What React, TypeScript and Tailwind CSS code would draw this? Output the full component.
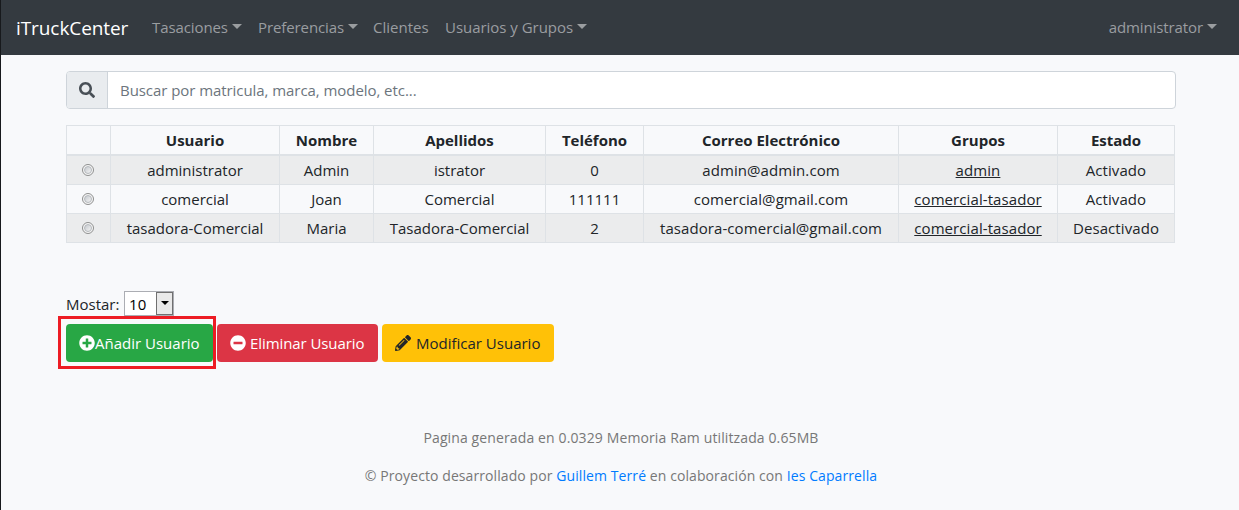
import React from "react";
import { FaSearch, FaPlusCircle, FaMinusCircle, FaPencilAlt } from "react-icons/fa";

function Caret() {
  return (
    <span className="ml-1 mt-[-1px] inline-block h-0 w-0 border-x-[5px] border-t-[5px] border-x-transparent border-t-current" />
  );
}

function NavItem({ label, caret = true, className }: { label: string; caret?: boolean; className: string }) {
  return (
    <a className={`flex h-10 items-center pb-[2px] whitespace-nowrap text-[#9a9da0] ${className}`}>
      <span>{label}</span>
      {caret && <Caret />}
    </a>
  );
}

const headers = ["", "Usuario", "Nombre", "Apellidos", "Teléfono", "Correo Electrónico", "Grupos", "Estado"];
const widths = ["w-[44px]", "w-[169px]", "w-[94px]", "w-[172px]", "w-[98px]", "w-[255px]", "w-[159px]", "w-[117px]"];
const rows = [
  ["administrator", "Admin", "istrator", "0", "admin@admin.com", "admin", "Activado"],
  ["comercial", "Joan", "Comercial", "111111", "comercial@gmail.com", "comercial-tasador", "Activado"],
  ["tasadora-Comercial", "Maria", "Tasadora-Comercial", "2", "tasadora-comercial@gmail.com", "comercial-tasador", "Desactivado"],
];

function Radio() {
  return (
    <span className="ml-[15px] flex h-3 w-3 items-center justify-center rounded-full border border-[#8e8f8f] bg-[#f6f6f6]">
      <span className="h-2 w-2 rounded-full border border-[#b4b8bc] bg-linear-to-br from-[#c6cacf] to-[#f4f4f4]" />
    </span>
  );
}

export default function App() {
  return (
    <div className="h-[510px] w-[1239px] overflow-hidden border-l border-[#17191c] bg-[#f8f9fb] font-['Open_Sans','Noto_Sans',sans-serif] text-[15px] leading-6 text-[#212529]">
      <nav className="flex h-[55px] items-center bg-[#343a40] pr-[22px] pl-[15px]">
        <a className="w-[136px] text-[19px] tracking-[-0.08px] whitespace-nowrap text-white">iTruckCenter</a>
        <NavItem label="Tasaciones" className="w-[106px] tracking-[-0.1px]" />
        <NavItem label="Preferencias" className="w-[115px] tracking-[-0.1px]" />
        <NavItem label="Clientes" caret={false} className="w-[72px]" />
        <NavItem label="Usuarios y Grupos" className="tracking-[-0.03px]" />
        <NavItem label="administrator" className="ml-auto tracking-[-0.1px]" />
      </nav>

      <main className="pl-[65px]">
        <div className="mt-4 flex h-[38px] w-[1110px] overflow-hidden rounded border border-[#ced4da] bg-white">
          <div className="flex w-[41px] items-center justify-center border-r border-[#ced4da] bg-[#e9ecef] text-[#495057]">
            <FaSearch size={16} />
          </div>
          <div className="flex items-center pl-3 tracking-[-0.06px] text-[#6c757d]">Buscar por matricula, marca, modelo, etc...</div>
        </div>

        <table className="mt-4 w-[1109px] table-fixed border-separate border-spacing-0 border-t border-l border-[#dee2e6] text-center">
          <thead>
            <tr className="h-[30px]">
              {headers.map((h, i) => (
                <th key={i} className={`${widths[i]} border-r border-b-2 border-[#dee2e6] p-0 leading-[26px] font-bold whitespace-nowrap`}>
                  {h}
                </th>
              ))}
            </tr>
          </thead>
          <tbody>
            {rows.map((r, i) => (
              <tr key={i} className="h-[29px] odd:bg-[#ebeced]">
                <td className="border-r border-b border-[#dee2e6] p-0">
                  <Radio />
                </td>
                {r.map((c, j) => (
                  <td
                    key={j}
                    className={`border-r border-b border-[#dee2e6] p-0 leading-6 whitespace-nowrap ${j >= 4 ? "tracking-[0.08px]" : ""}`}
                  >
                    {j === 5 ? <u className="underline-offset-1 [text-decoration-skip-ink:none]">{c}</u> : c}
                  </td>
                ))}
              </tr>
            ))}
          </tbody>
        </table>

        <div className="mt-[47px] flex h-[27px] items-center">
          <span className="w-[58px] whitespace-nowrap">Mostar:</span>
          <div className="mb-[1px] flex h-[25px] w-[50px] border border-[#abadb3] bg-white">
            <span className="flex-1 pl-1 leading-6 tracking-[0.2px] text-black">10</span>
            <span className="flex w-[17px] items-center justify-center border border-[#707070] bg-[#e9e9e9]">
              <span className="border-x-[4px] border-t-[4px] border-x-transparent border-t-black" />
            </span>
          </div>
        </div>

        <div className="mt-[7px] flex h-[38px] gap-1">
          <div className="relative w-[147px]">
            <button className="flex h-[38px] w-[147px] items-center rounded bg-[#28a745] pl-[13px] whitespace-nowrap text-white">
              <FaPlusCircle size={16} />
              Añadir Usuario
            </button>
            <div className="absolute -top-2 -left-2 h-[53px] w-[158px] border-3 border-[#ed1c24]" />
          </div>
          <button className="flex w-[161px] items-center gap-1 rounded bg-[#dc3545] pl-[13px] tracking-[-0.08px] whitespace-nowrap text-white">
            <FaMinusCircle size={16} />
            Eliminar Usuario
          </button>
          <button className="flex w-[172px] items-center gap-[5px] rounded bg-[#ffc107] pl-[13px] whitespace-nowrap">
            <FaPencilAlt size={16} />
            Modificar Usuario
          </button>
        </div>
      </main>

      <footer className="mt-16 flex flex-col items-center gap-[14px] pl-[2px] whitespace-nowrap text-[14px] text-[#777777]">
        <p className="tracking-[0.12px]">Pagina generada en 0.0329 Memoria Ram utilitzada 0.65MB</p>
        <p className="tracking-[0.085px]">
          © Proyecto desarrollado por <a className="text-[#007bff]">Guillem Terré</a> en colaboración con{" "}
          <a className="text-[#007bff]">Ies Caparrella</a>
        </p>
      </footer>
    </div>
  );
}
